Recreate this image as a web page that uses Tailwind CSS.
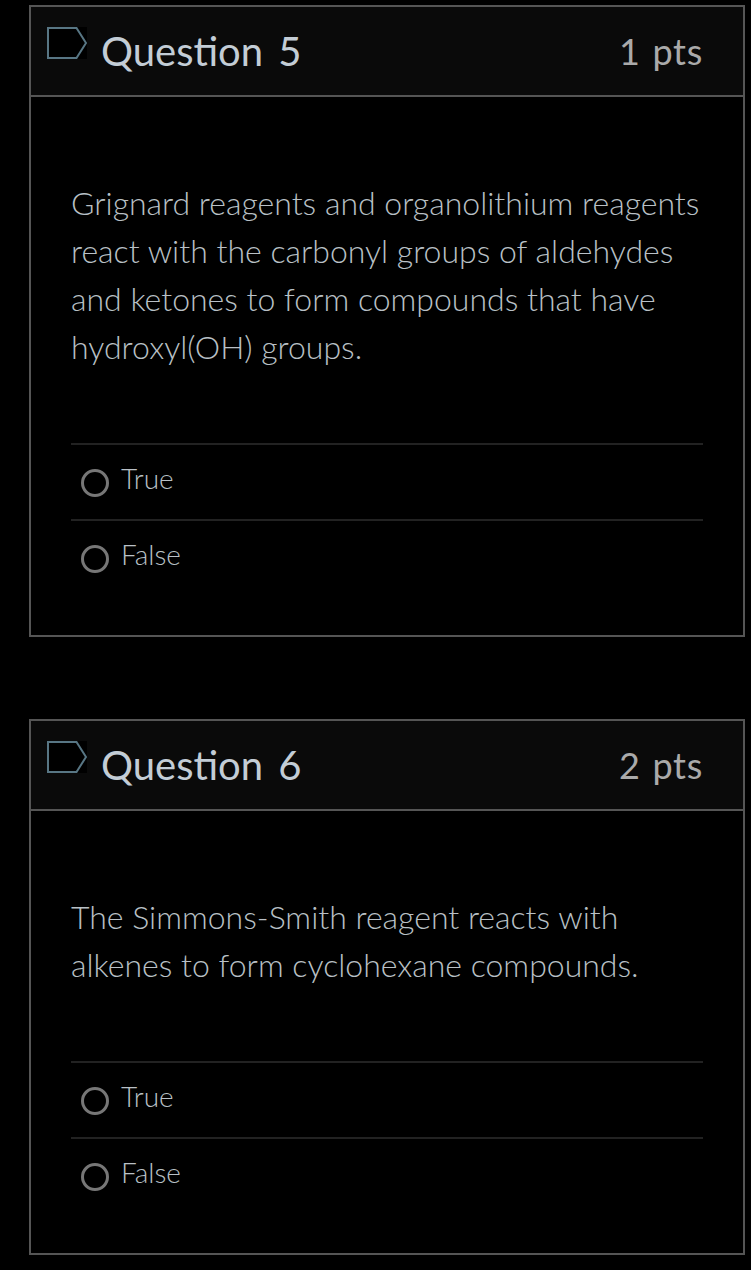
<!DOCTYPE html>
<html lang="en">
<head>
  <meta charset="UTF-8">
  <meta name="viewport" content="width=device-width, initial-scale=1.0">
  <title>Quiz</title>
  <script src="https://cdn.jsdelivr.net/npm/@tailwindcss/browser@4"></script>
</head>
<body class="bg-black font-['Lato',sans-serif] min-h-screen pt-[5px] pl-[29px] pr-[6px]">

  <!-- Question 5 -->
  <section class="h-[632px] border-2 border-[#555] mb-[82px]">
    <header class="h-[90px] flex items-start border-b-2 border-[#555] bg-[#0a0a0a] pl-[15px] pr-10">
      <svg class="mt-[19px] w-[42px] h-[34px]" viewBox="0 0 42 34" fill="none">
        <rect x="1" y="1" width="40" height="32" fill="#000"/>
        <path d="M2 2H30.500L40 17L30.500 32H2Z" stroke="#587684" stroke-width="2"/>
      </svg>
      <h2 class="ml-[13px] mt-[20px] text-[40px] leading-[48px] text-[#c3cdd6] [word-spacing:5px] [font-variant-ligatures:common-ligatures_discretionary-ligatures]">Question 5</h2>
      <span class="ml-auto mt-[20px] text-[36px] leading-[48px] text-[#aaa] tracking-[0.7px] [word-spacing:2px]">1 pts</span>
    </header>
    <div class="px-10 pt-[82px]">
      <p class="text-[32px] leading-[48px] font-light text-[#b9c0c6] whitespace-nowrap">Grignard reagents and organolithium reagents<br>react with the carbonyl groups of aldehydes<br>and ketones to form compounds that have<br>hydroxyl(OH) groups.</p>
      <div class="mt-[72px]">
        <label class="flex h-[76px] border-t-2 border-[#222] pl-[10px]">
          <span class="mt-6 size-7 rounded-full border-[3px] border-[#777]"></span>
          <span class="ml-3 mt-[15px] text-[28px] leading-[36px] font-light text-[#b9c0c6]">True</span>
        </label>
        <label class="flex h-[76px] border-t-2 border-[#222] pl-[10px]">
          <span class="mt-6 size-7 rounded-full border-[3px] border-[#777]"></span>
          <span class="ml-3 mt-[15px] text-[28px] leading-[36px] font-light text-[#b9c0c6]">False</span>
        </label>
      </div>
    </div>
  </section>

  <!-- Question 6 -->
  <section class="h-[536px] border-2 border-[#555]">
    <header class="h-[90px] flex items-start border-b-2 border-[#555] bg-[#0a0a0a] pl-[15px] pr-10">
      <svg class="mt-[19px] w-[42px] h-[34px]" viewBox="0 0 42 34" fill="none">
        <rect x="1" y="1" width="40" height="32" fill="#000"/>
        <path d="M2 2H30.500L40 17L30.500 32H2Z" stroke="#587684" stroke-width="2"/>
      </svg>
      <h2 class="ml-[13px] mt-[20px] text-[40px] leading-[48px] text-[#c3cdd6] [word-spacing:5px] [font-variant-ligatures:common-ligatures_discretionary-ligatures]">Question 6</h2>
      <span class="ml-auto mt-[20px] text-[36px] leading-[48px] text-[#aaa] tracking-[0.7px] [word-spacing:2px]">2 pts</span>
    </header>
    <div class="px-10 pt-[82px]">
      <p class="text-[32px] leading-[48px] font-light text-[#b9c0c6] whitespace-nowrap">The Simmons-Smith reagent reacts with<br>alkenes to form cyclohexane compounds.</p>
      <div class="mt-[72px]">
        <label class="flex h-[76px] border-t-2 border-[#222] pl-[10px]">
          <span class="mt-6 size-7 rounded-full border-[3px] border-[#777]"></span>
          <span class="ml-3 mt-[15px] text-[28px] leading-[36px] font-light text-[#b9c0c6]">True</span>
        </label>
        <label class="flex h-[76px] border-t-2 border-[#222] pl-[10px]">
          <span class="mt-6 size-7 rounded-full border-[3px] border-[#777]"></span>
          <span class="ml-3 mt-[15px] text-[28px] leading-[36px] font-light text-[#b9c0c6]">False</span>
        </label>
      </div>
    </div>
  </section>

</body>
</html>
